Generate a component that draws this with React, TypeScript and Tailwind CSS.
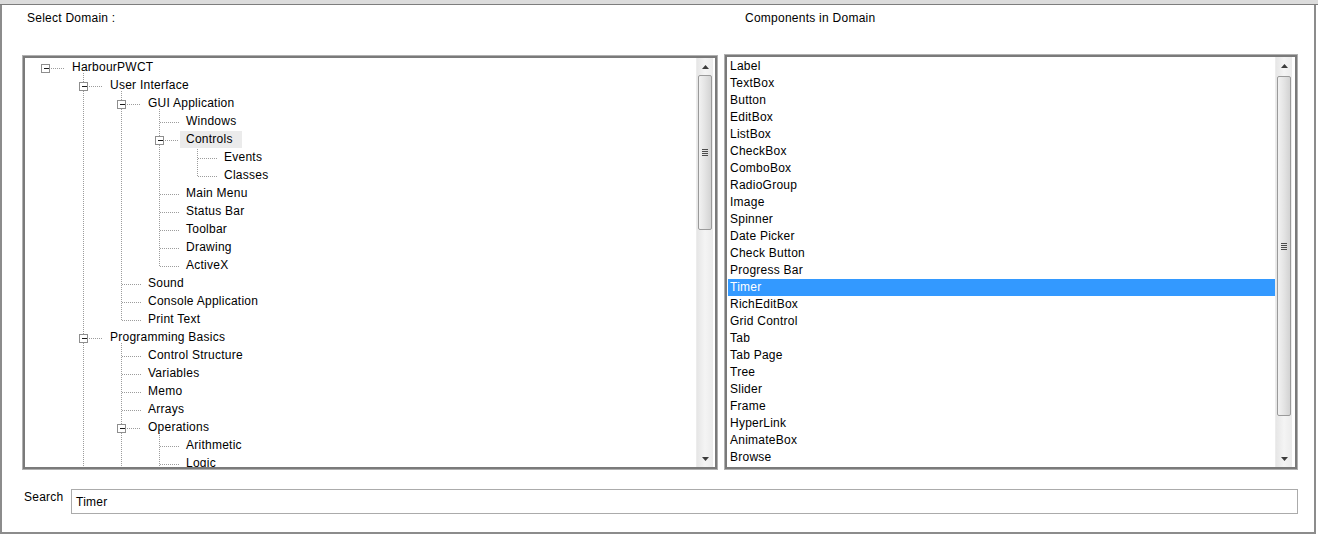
import React from "react";

// Tree data for the domain panel
interface TreeNode {
  label: string;
  children?: TreeNode[];
  selected?: boolean;
}

interface FlatRow {
  label: string;
  level: number;
  index: number;
  hasChildren: boolean;
  selected?: boolean;
  lastChildIndex?: number;
}

const domainTree: TreeNode = {
  label: "HarbourPWCT",
  children: [
    {
      label: "User Interface",
      children: [
        {
          label: "GUI Application",
          children: [
            { label: "Windows" },
            {
              label: "Controls",
              selected: true,
              children: [{ label: "Events" }, { label: "Classes" }],
            },
            { label: "Main Menu" },
            { label: "Status Bar" },
            { label: "Toolbar" },
            { label: "Drawing" },
            { label: "ActiveX" },
          ],
        },
        { label: "Sound" },
        { label: "Console Application" },
        { label: "Print Text" },
      ],
    },
    {
      label: "Programming Basics",
      children: [
        { label: "Control Structure" },
        { label: "Variables" },
        { label: "Memo" },
        { label: "Arrays" },
        {
          label: "Operations",
          children: [{ label: "Arithmetic" }, { label: "Logic" }, { label: "Comparison" }],
        },
        { label: "Functions" },
      ],
    },
    { label: "Advanced" },
  ],
};

const components = [
  "Label",
  "TextBox",
  "Button",
  "EditBox",
  "ListBox",
  "CheckBox",
  "ComboBox",
  "RadioGroup",
  "Image",
  "Spinner",
  "Date Picker",
  "Check Button",
  "Progress Bar",
  "Timer",
  "RichEditBox",
  "Grid Control",
  "Tab",
  "Tab Page",
  "Tree",
  "Slider",
  "Frame",
  "HyperLink",
  "AnimateBox",
  "Browse",
];

function flatten(node: TreeNode, level: number, out: FlatRow[]) {
  const row: FlatRow = {
    label: node.label,
    level,
    index: out.length,
    hasChildren: !!node.children?.length,
    selected: node.selected,
  };
  out.push(row);
  if (node.children) {
    let last = 0;
    node.children.forEach((c) => {
      last = out.length;
      flatten(c, level + 1, out);
    });
    row.lastChildIndex = last;
  }
  return out;
}

const rows = flatten(domainTree, 0, []);

const ROW_H = 18;
const X0 = 20; // box centre of level 0 inside the tree area
const STEP = 38;

const levelPad = ["pl-[41px]", "pl-[79px]", "pl-[117px]", "pl-[155px]", "pl-[193px]"];

function TreeLines() {
  const h = rows.length * ROW_H;
  const lines: React.ReactNode[] = [];
  const boxes: React.ReactNode[] = [];
  rows.forEach((r) => {
    const cx = X0 + STEP * r.level + 0.5;
    const cy = r.index * ROW_H + 10 + 0.5;
    if (r.hasChildren && r.lastChildIndex !== undefined) {
      const vx = cx + STEP;
      const endY = r.lastChildIndex * ROW_H + 10;
      lines.push(
        <line key={"v" + r.index} x1={vx} y1={cy + 4} x2={vx} y2={endY} />
      );
      lines.push(
        <line key={"h" + r.index} x1={cx + 5} y1={cy} x2={cx + 19} y2={cy} />
      );
      boxes.push(
        <g key={"b" + r.index}>
          <rect x={cx - 4} y={cy - 4} width={8} height={8} fill="#fff" stroke="#8e8e8e" />
          <line x1={cx - 2} y1={cy} x2={cx + 3} y2={cy} stroke="#1a1a1a" />
        </g>
      );
    } else {
      lines.push(
        <line key={"h" + r.index} x1={cx} y1={cy} x2={cx + 20} y2={cy} />
      );
    }
  });
  return (
    <svg
      width={200}
      height={h}
      className="absolute left-0 top-0 pointer-events-none"
      shapeRendering="crispEdges"
    >
      <g stroke="#9c9c9c" strokeDasharray="1 1">{lines}</g>
      {boxes}
    </svg>
  );
}

function ScrollBar({ thumbClass }: { thumbClass: string }) {
  return (
    <div className="w-[17px] h-full flex flex-col bg-gradient-to-r from-[#e6e6e6] via-[#f4f4f4] to-[#ebebeb] border-l border-[#ececec]">
      <div className="h-[17px] flex items-center justify-center">
        <svg width="7" height="4">
          <path d="M0 4 L3.5 0 L7 4Z" fill="#3c3c3c" />
        </svg>
      </div>
      <div className="flex-1 flex flex-col">
        <div
          className={
            thumbClass +
            " mx-[1px] rounded-[2px] border border-[#9a9a9a] bg-gradient-to-r from-[#f2f2f2] via-[#e4e4e4] to-[#d3d3d3] flex items-center justify-center"
          }
        >
          <div className="flex flex-col gap-[1px]">
            <div className="w-[6px] h-px bg-[#4c4c4c]" />
            <div className="w-[6px] h-px bg-[#4c4c4c]" />
            <div className="w-[6px] h-px bg-[#4c4c4c]" />
            <div className="w-[6px] h-px bg-[#4c4c4c]" />
          </div>
        </div>
      </div>
      <div className="h-[17px] flex items-center justify-center">
        <svg width="7" height="4">
          <path d="M0 0 L7 0 L3.5 4Z" fill="#3c3c3c" />
        </svg>
      </div>
    </div>
  );
}

export default function App() {
  return (
    <div
      className="w-[1318px] h-[535px] bg-white flex flex-col overflow-hidden text-[12px] text-black tracking-[0.25px]"
      style={{ fontFamily: '"Liberation Sans", Arial, sans-serif' }}
    >
      <div className="h-[5px] bg-[#dcdcdc] border-b border-[#7d7d7d]" />
      <div className="w-[1316px] h-[529px] border-l-2 border-r-2 border-b-2 border-[#8c8c8c] flex flex-col">
        <div className="flex">
          {/* Domain tree */}
          <div className="w-[716px]">
            <div className="h-[50px] pl-[25px] pt-[6px] leading-[14px]">Select Domain :</div>
            <div className="ml-[20px] w-[696px] h-[415px] border border-[#b0b0b0]">
              <div className="w-full h-full border-2 border-[#7a7a7a] flex pr-[2px]">
                <div className="flex-1 relative overflow-hidden bg-white">
                  <TreeLines />
                  <div className="relative flex flex-col">
                    {rows.map((r) => (
                      <div
                        key={r.index}
                        className={levelPad[r.level] + " h-[18px] flex items-center"}
                      >
                        <span
                          className={
                            "px-[6px] h-[17px] leading-[17px] whitespace-nowrap " +
                            (r.selected ? "bg-[#ebebeb] pr-[9px]" : "")
                          }
                        >
                          {r.label}
                        </span>
                      </div>
                    ))}
                  </div>
                </div>
                <ScrollBar thumbClass="h-[155px]" />
              </div>
            </div>
          </div>

          {/* Components list */}
          <div className="flex-1">
            <div className="h-[49px] pl-[27px] pt-[6px] leading-[14px]">Components in Domain</div>
            <div className="ml-[6px] w-[574px] h-[416px] border border-[#b0b0b0]">
              <div className="w-full h-full border-2 border-[#7a7a7a] flex pl-px pr-[3px]">
                <div className="flex-1 overflow-hidden flex flex-col pt-px">
                  {components.map((c) => (
                    <div
                      key={c}
                      className={
                        "h-[17px] leading-[17px] pl-[2px] whitespace-nowrap " +
                        (c === "Timer" ? "bg-[#3399ff] text-white" : "")
                      }
                    >
                      {c}
                    </div>
                  ))}
                </div>
                <ScrollBar thumbClass="mt-[2px] h-[340px]" />
              </div>
            </div>
          </div>
        </div>

        {/* Search */}
        <div className="mt-[19px] flex">
          <div className="w-[69px] pl-[22px] mt-[1px] leading-[14px]">Search</div>
          <div className="w-[1227px] h-[25px] border border-[#ababab] pl-[4px] flex items-center">
            Timer
          </div>
        </div>
      </div>
    </div>
  );
}
